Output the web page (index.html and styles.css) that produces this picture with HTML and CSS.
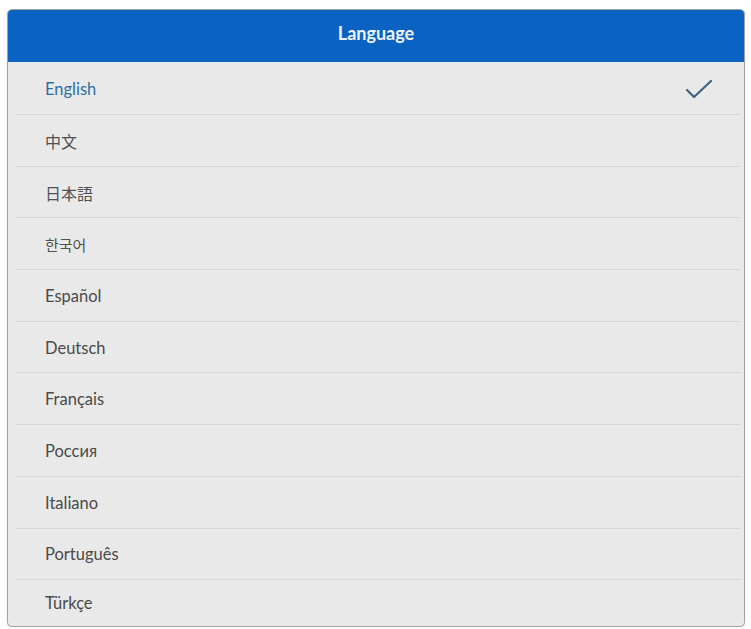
FILE: index.html
```html
<!DOCTYPE html>
<html lang="en">
<head>
<meta charset="utf-8">
<title>Language</title>
<link rel="stylesheet" href="styles.css">
</head>
<body>
<div class="panel">
  <div class="header">Language</div>
  <ul class="list">
    <li class="item selected"><span>English</span>
      <svg class="check" width="28" height="20" viewBox="0 0 28 20"><path d="M2 11 L9 18 L26 2" fill="none" stroke="#3d6283" stroke-width="2.2" stroke-linecap="round" stroke-linejoin="round"/></svg>
    </li>
    <li class="item cjk" lang="zh"><span>中文</span></li>
    <li class="item cjk" lang="ja"><span>日本語</span></li>
    <li class="item cjk" lang="ko"><span>한국어</span></li>
    <li class="item"><span>Español</span></li>
    <li class="item"><span>Deutsch</span></li>
    <li class="item"><span>Français</span></li>
    <li class="item"><span>Россия</span></li>
    <li class="item"><span>Italiano</span></li>
    <li class="item"><span>Português</span></li>
    <li class="item last"><span>Türkçe</span></li>
  </ul>
</div>
</body>
</html>
```

FILE: styles.css
```css
html, body {
  margin: 0;
  padding: 0;
  background: #ffffff;
}
body {
  padding: 9px 6px 0 7px;
  font-family: Lato, "Noto Sans CJK SC", sans-serif;
}
.panel {
  width: 736px;
  background: #e9e9e9;
  border: 1px solid #a4a4a4;
  border-radius: 5px;
  overflow: hidden;
  box-shadow: 0 1px 2px rgba(0,0,0,0.15);
}
.header {
  height: 52px;
  box-sizing: border-box;
  padding-bottom: 6px;
  background: #0a63c2;
  color: #eef4fb;
  font-weight: bold;
  font-size: 18px;
  display: flex;
  align-items: center;
  justify-content: center;
}
.list {
  list-style: none;
  margin: 0;
  padding: 0;
}
.item {
  height: 51.7px;
  box-sizing: border-box;
  display: flex;
  align-items: center;
  justify-content: space-between;
  padding: 0 31px 0 37px;
  font-size: 16.5px;
  color: #4a4a4a;
  position: relative;
}
.item::after {
  content: "";
  position: absolute;
  left: 8px;
  right: 4px;
  bottom: 0;
  height: 1px;
  background: #d6d6d6;
}
.item.last::after {
  display: none;
}
.item.last {
  height: 46px;
}
.item.selected {
  color: #2f6f9e;
  height: 53px;
}
.cjk {
  font-family: "Noto Sans CJK SC", sans-serif;
  font-size: 16px;
  color: #505050;
}
.cjk[lang="ja"] { font-family: "Noto Sans CJK JP", sans-serif; }
.cjk[lang="ko"] { font-family: "Noto Sans CJK KR", sans-serif; font-size: 15px; }
.check {
  display: block;
}
```
